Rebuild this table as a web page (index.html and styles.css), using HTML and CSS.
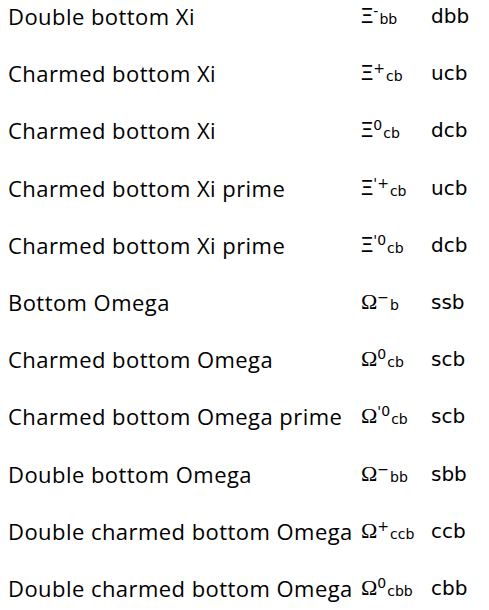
FILE: index.html
```html
<!DOCTYPE html>
<html>
<head>
<meta charset="utf-8">
<link rel="stylesheet" href="styles.css">
</head>
<body>
<div class="table">
  <div class="name">Double bottom Xi</div><div class="sym"><span class="xi">Ξ</span><sup>-</sup><sub>bb</sub></div><div class="q">dbb</div>
  <div class="name">Charmed bottom Xi</div><div class="sym"><span class="xi">Ξ</span><sup>+</sup><sub>cb</sub></div><div class="q">ucb</div>
  <div class="name">Charmed bottom Xi</div><div class="sym"><span class="xi">Ξ</span><sup>0</sup><sub>cb</sub></div><div class="q">dcb</div>
  <div class="name">Charmed bottom Xi prime</div><div class="sym"><span class="xi">Ξ</span><sup>'+</sup><sub>cb</sub></div><div class="q">ucb</div>
  <div class="name">Charmed bottom Xi prime</div><div class="sym"><span class="xi">Ξ</span><sup>'0</sup><sub>cb</sub></div><div class="q">dcb</div>
  <div class="name">Bottom Omega</div><div class="sym"><span class="om">Ω</span><sup>−</sup><sub>b</sub></div><div class="q">ssb</div>
  <div class="name">Charmed bottom Omega</div><div class="sym"><span class="om">Ω</span><sup>0</sup><sub>cb</sub></div><div class="q">scb</div>
  <div class="name">Charmed bottom Omega prime</div><div class="sym"><span class="om">Ω</span><sup>'0</sup><sub>cb</sub></div><div class="q">scb</div>
  <div class="name">Double bottom Omega</div><div class="sym"><span class="om">Ω</span><sup>−</sup><sub>bb</sub></div><div class="q">sbb</div>
  <div class="name">Double charmed bottom Omega</div><div class="sym"><span class="om">Ω</span><sup>+</sup><sub>ccb</sub></div><div class="q">ccb</div>
  <div class="name">Double charmed bottom Omega</div><div class="sym"><span class="om">Ω</span><sup>0</sup><sub>cbb</sub></div><div class="q">cbb</div>
</div>
</body>
</html>
```

FILE: styles.css
```css
html, body {
  margin: 0;
  padding: 0;
  background: #fff;
  color: #000;
}
.table {
  display: grid;
  grid-template-columns: 353px 70px auto;
  grid-auto-rows: 57.2px;
  padding-left: 8px;
  margin-top: -1px;
}
.name {
  font-family: "Open Sans", sans-serif;
  font-size: 22px;
  letter-spacing: 0.45px;
  line-height: 34px;
  white-space: nowrap;
}
.sym, .q {
  font-family: "DejaVu Sans", sans-serif;
  font-size: 20px;
  line-height: 34px;
  white-space: nowrap;
}
.xi {
  font-family: "Liberation Sans", sans-serif;
  font-size: 22px;
  display: inline-block;
  transform: scaleX(0.85);
  transform-origin: left;
  margin-right: -2px;
}
.om {
  font-family: "Liberation Serif", serif;
  font-size: 22px;
}
sup, sub {
  font-family: "DejaVu Sans", sans-serif;
  font-size: 14px;
  line-height: 0;
  position: relative;
  vertical-align: baseline;
}
sup {
  top: -7px;
}
sub {
  top: 1px;
  margin-left: 1px;
}
```
